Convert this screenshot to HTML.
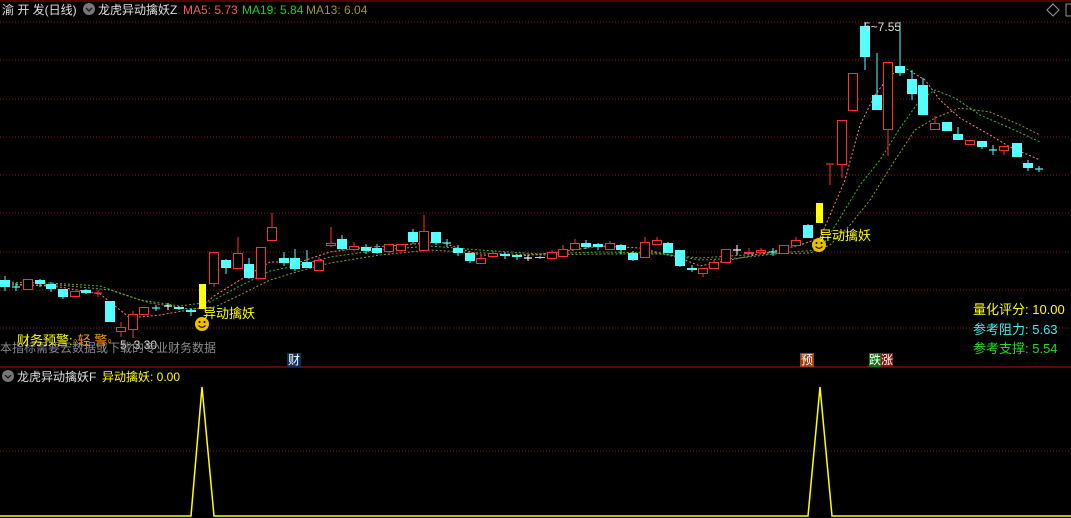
<!DOCTYPE html>
<html><head><meta charset="utf-8"><style>
body{margin:0;background:#000;width:1071px;height:518px;overflow:hidden;font-family:"Liberation Sans","Noto Sans CJK SC",sans-serif}
svg{display:block}
text{font-family:"Liberation Sans","Noto Sans CJK SC",sans-serif}
</style></head><body>
<svg id="s" width="1071" height="518" xmlns="http://www.w3.org/2000/svg">
<rect width="1071" height="518" fill="#000"/>
<line x1="0" y1="1" x2="1071" y2="1" stroke="#a00000" stroke-width="1"/>
<g id="grid" stroke="#8a1818" stroke-width="1" stroke-dasharray="1,2"></g>
<line x1="0" y1="367" x2="1071" y2="367" stroke="#c01010" stroke-width="1"/>
<g id="ma"></g>
<g id="c"></g>
<rect x="199" y="284" width="7" height="25" fill="#ffff00"/>
<rect x="816" y="203" width="7" height="20" fill="#ffff00"/>
<g>
<circle cx="202" cy="324" r="7" fill="#e8c000"/><circle cx="199.5" cy="322" r="1" fill="#000"/><circle cx="204.5" cy="322" r="1" fill="#000"/><path d="M198.5 325.5 Q202 329 205.5 325.5" stroke="#000" fill="none" stroke-width="1"/>
<circle cx="819" cy="245" r="7" fill="#e8c000"/><circle cx="816.5" cy="243" r="1" fill="#000"/><circle cx="821.5" cy="243" r="1" fill="#000"/><path d="M815.5 246.5 Q819 250 822.5 246.5" stroke="#000" fill="none" stroke-width="1"/>
</g>
<text x="203" y="318" fill="#ffff00" font-size="13">异动擒妖</text>
<text x="819" y="240" fill="#ffff00" font-size="13">异动擒妖</text>
<text x="864" y="31" fill="#ddd" font-size="12">5~7.55</text>
<text x="120" y="349" fill="#ddd" font-size="12">5~3.30</text>
<text x="2" y="14" fill="#e0e0e0" font-size="12">渝 开 发(日线)</text>
<circle cx="89" cy="9" r="6" fill="#777"/><path d="M86 8 L89 11 L92 8" stroke="#222" fill="none" stroke-width="1.5"/>
<text x="98" y="14" fill="#e0e0e0" font-size="12">龙虎异动擒妖Z</text>
<text x="183" y="14" fill="#ff5a5a" font-size="12">MA5: 5.73</text>
<text x="242" y="14" fill="#22cc22" font-size="12">MA19: 5.84</text>
<text x="306" y="14" fill="#999922" font-size="12">MA13: 6.04</text>
<path d="M1047 10 L1053 4 L1059 10 L1053 16Z" stroke="#999" fill="none"/>
<rect x="1066" y="4" width="8" height="12" stroke="#999" fill="none"/>
<text x="0" y="352" fill="#8a8a8a" font-size="12">本指标需要云数据或下载的专业财务数据</text>
<text x="17" y="345" fill="#ffff00" font-size="13">财务预警:</text>
<text x="73" y="345" fill="#ff9900" font-size="13">◦轻 警◦</text>
<rect x="287" y="353" width="14" height="14" fill="#103060"/><text x="288" y="364" fill="#fff" font-size="12">财</text>
<rect x="800" y="353" width="14" height="14" fill="#a04010"/><text x="801" y="364" fill="#fff" font-size="12">预</text>
<rect x="869" y="353" width="12" height="14" fill="#107010"/><text x="869" y="364" fill="#fff" font-size="12">跌</text>
<rect x="881" y="353" width="12" height="14" fill="#801010"/><text x="881" y="364" fill="#fff" font-size="12">涨</text>
<text x="973" y="314" fill="#ffff00" font-size="13">量化评分: 10.00</text>
<text x="973" y="334" fill="#44eeee" font-size="13">参考阻力: 5.63</text>
<text x="973" y="353" fill="#22dd22" font-size="13">参考支撑: 5.54</text>
<circle cx="8" cy="376" r="6" fill="#777"/><path d="M5 375 L8 378 L11 375" stroke="#222" fill="none" stroke-width="1.5"/>
<text x="17" y="381" fill="#e0e0e0" font-size="12">龙虎异动擒妖F</text>
<text x="102" y="381" fill="#ffff00" font-size="12">异动擒妖: 0.00</text>
<line x1="0" y1="451" x2="1071" y2="451" stroke="#8a1818" stroke-dasharray="1,2"/>
<polyline points="0,516 191,516 202,387 214,516 808,516 820,387 832,516 1071,516" stroke="#ffff00" fill="none" stroke-width="1.5"/>
</svg>
<script>
const NS="http://www.w3.org/2000/svg";
function el(p,t,a){const e=document.createElementNS(NS,t);for(const k in a)e.setAttribute(k,a[k]);p.appendChild(e);return e;}
const g=document.getElementById('grid');
[22,60,99,137,175,213,252,290,328].forEach(y=>el(g,'line',{x1:0,y1:y,x2:1071,y2:y}));
const C=[[5,280,287,276,291,'c'],[16,287,287,283,291,'c'],[28,279,289,279,289,'r'],[40,280,284,279,287,'c'],[51,284,289,282,292,'c'],[63,289,297,289,299,'c'],[75,291,296,291,296,'r'],[86,290,293,289,294,'c'],[98,293,293,290,297,'r'],[110,301,322,301,322,'c'],[121,327,331,322,337,'r'],[133,314,329,311,338,'r'],[144,307,314,307,314,'r'],[156,308,308,305,311,'c'],[168,306,306,303,310,'w'],[179,307,309,306,310,'c'],[191,310,312,308,316,'c'],
[214,252,283,252,287,'r'],[226,260,268,259,274,'c'],[238,253,268,237,268,'r'],[249,264,278,258,279,'c'],[261,247,278,247,278,'r'],[272,227,240,213,240,'r'],[284,258,263,252,266,'c'],[295,258,269,249,271,'c'],[307,262,268,250,268,'c'],[319,260,270,257,270,'r'],[331,243,245,227,247,'r'],[342,239,249,235,250,'c'],[354,246,249,242,251,'r'],[366,247,251,244,254,'c'],[377,248,253,244,254,'c'],[389,244,251,244,255,'r'],[401,244,250,244,252,'r'],[413,232,242,229,244,'c'],[424,231,250,215,250,'r'],[436,232,243,232,245,'c'],
[447,243,243,239,247,'c'],[458,248,253,245,256,'c'],[470,253,261,253,263,'c'],[481,258,263,256,264,'r'],[493,253,256,251,258,'r'],[505,254,256,252,259,'c'],[517,255,257,254,260,'c'],[528,258,258,255,261,'w'],[540,257,258,256,259,'c'],[552,252,258,250,258,'r'],[563,249,256,245,256,'r'],[575,243,249,239,249,'r'],[586,243,247,240,249,'c'],[598,244,247,243,250,'c'],[610,243,249,241,249,'r'],[621,245,250,244,254,'c'],[633,253,260,251,261,'c'],[645,242,257,237,257,'r'],[657,240,244,237,245,'r'],[668,243,253,242,253,'c'],[680,250,266,250,267,'c'],[692,268,270,265,272,'c'],[703,268,273,268,277,'r'],[714,262,268,260,268,'r'],[726,249,262,249,263,'r'],[737,250,250,245,255,'w'],[749,252,253,248,253,'r'],[761,250,252,248,253,'r'],[773,252,252,248,256,'c'],[784,245,253,245,253,'r'],[796,240,245,237,245,'r'],[808,225,238,224,238,'c'],
[830,164,164,164,185,'r'],[842,120,164,120,178,'r'],[853,73,110,73,110,'r'],[865,26,57,22,70,'c'],[877,95,110,53,110,'c'],[888,62,129,62,156,'r'],[900,66,73,22,76,'c'],[912,79,94,70,100,'c'],[923,85,115,78,115,'c'],[935,123,129,116,129,'r'],[947,122,131,122,131,'c'],[958,134,140,127,140,'c'],[970,140,144,140,144,'r'],[982,141,147,141,149,'c'],[993,150,150,145,155,'c'],[1004,146,150,146,155,'r'],[1017,143,157,143,157,'c'],[1028,163,168,160,171,'c'],[1039,169,169,166,172,'c']];
const cg=document.getElementById('c');
const col={r:'#ff3030',c:'#55ffff',w:'#ffffff'};
C.forEach(([x,t,b,h,l,k])=>{const cl=col[k];
 el(cg,'line',{x1:x,y1:h,x2:x,y2:l,stroke:cl,'stroke-width':1});
 if(b-t<1){el(cg,'line',{x1:x-4,y1:t,x2:x+4,y2:t,stroke:cl,'stroke-width':1.2});}
 else if(k==='r'){el(cg,'rect',{x:x-4.5,y:t+.5,width:9,height:b-t,fill:'#000',stroke:cl,'stroke-width':1});}
 else el(cg,'rect',{x:x-5,y:t,width:10,height:b-t,fill:cl});
});
const mg=document.getElementById('ma');
function pl(pts,c){el(mg,'polyline',{points:pts,stroke:c,fill:'none','stroke-width':1,'stroke-dasharray':'2,2'});}
pl("0,283 60,287 100,294 130,318 160,315 200,308 214,296 240,280 270,262 300,262 330,252 360,248 400,245 440,242 480,255 520,256 560,252 600,246 640,248 680,258 700,266 730,260 770,252 800,245 820,238 830,215 845,180 860,125 875,95 890,75 905,68 925,80 940,100 960,118 990,135 1010,147 1040,160","#ff8080");
pl("0,282 50,283 100,286 140,300 180,306 210,302 240,286 270,271 300,265 330,257 380,250 430,246 480,250 540,254 600,252 660,253 700,260 740,258 790,252 820,250 840,218 860,185 880,160 900,128 920,100 935,90 955,98 980,115 1010,128 1040,142","#33bb33");
pl("0,285 60,285 110,290 150,303 190,309 215,307 240,295 270,280 300,271 330,263 380,255 430,250 480,253 540,255 600,254 660,254 700,258 760,254 810,253 830,245 850,225 870,200 895,160 915,130 935,118 960,108 990,112 1020,125 1040,135","#999922");
</script>
</body></html>
